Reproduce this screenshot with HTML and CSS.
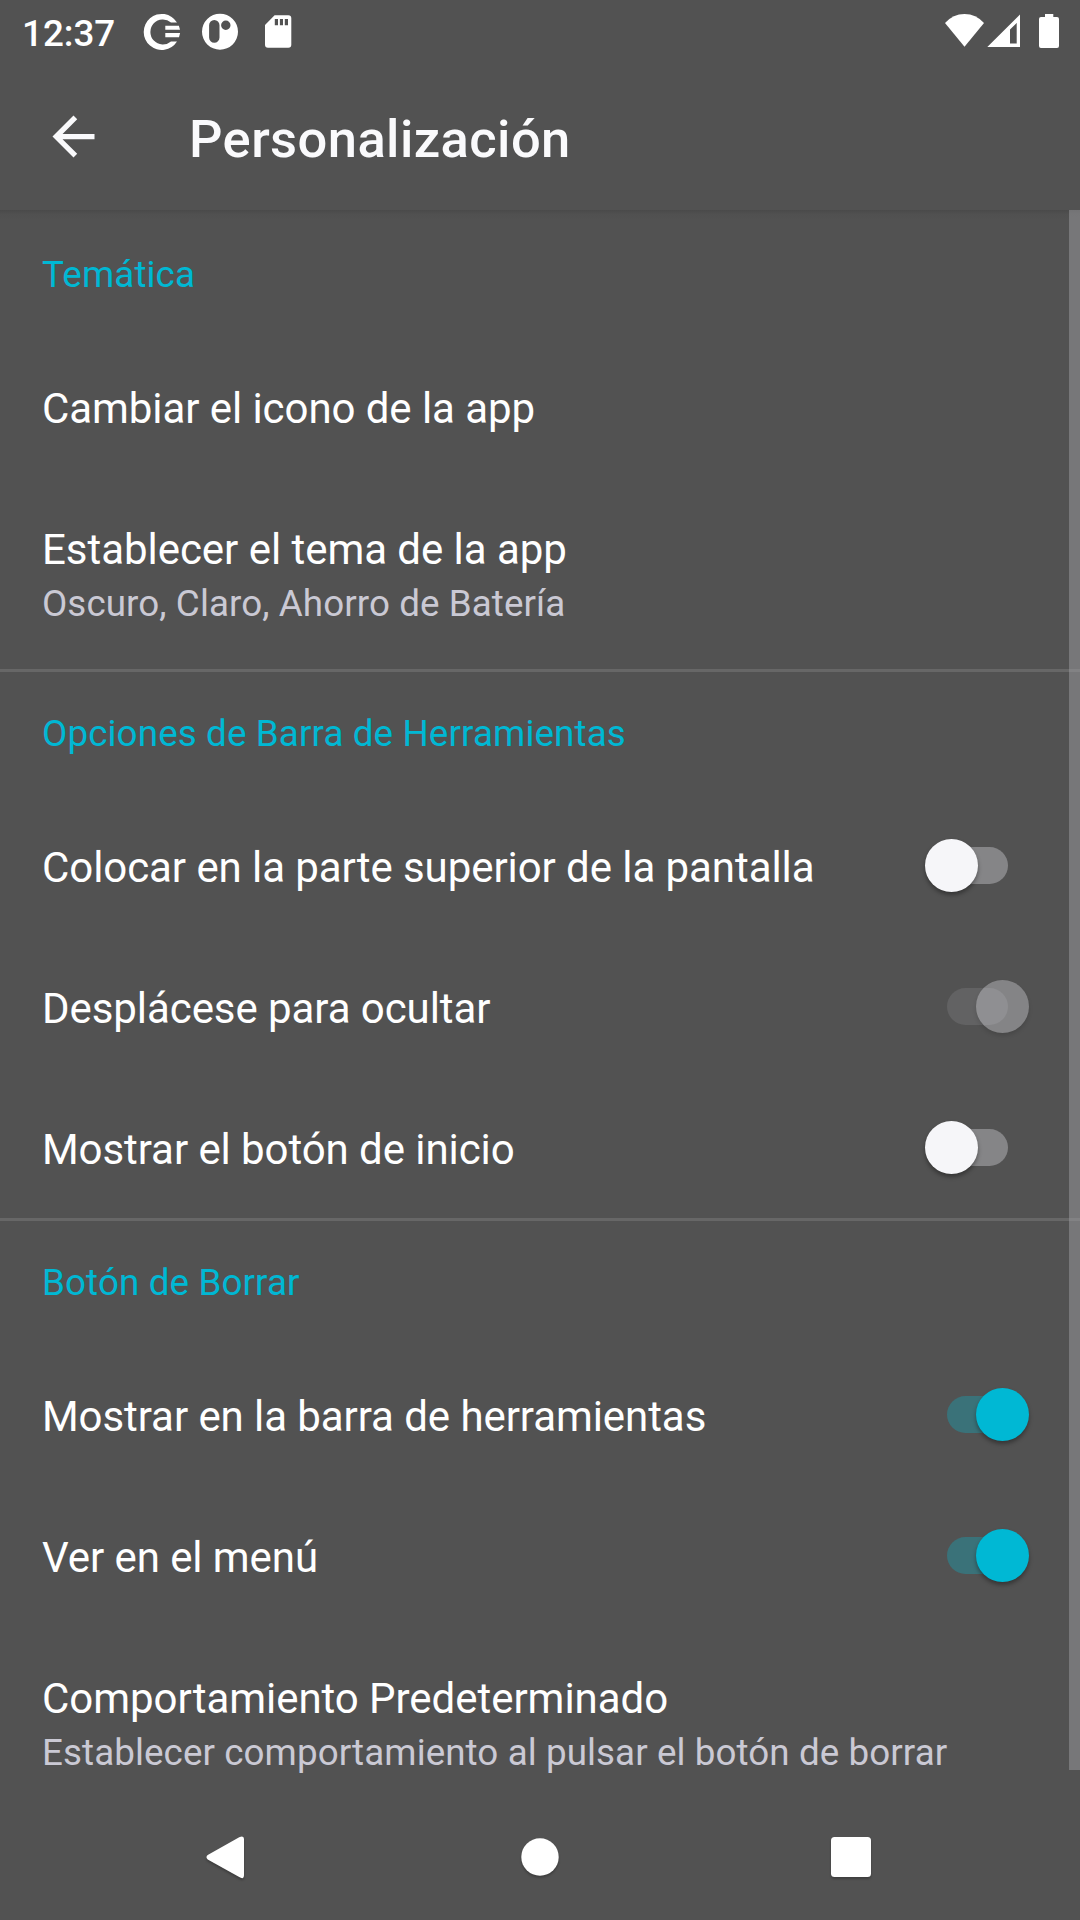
FILE: index.html
```html
<!DOCTYPE html>
<html lang="es">
<head>
<meta charset="utf-8">
<title>Personalización</title>
<link rel="stylesheet" href="styles.css">
</head>
<body>
<div class="screen">
  <div class="status">
    <span class="clock">12:37</span>
    <svg class="notifications" width="150" height="40" viewBox="143 12 150 40" fill="#fff">
      <path d="M177 22.400A18 18 0 1 0 177 41.400L171 41.400A12.500 12.500 0 1 1 171 22.400Z"/>
      <path d="M165.300 25.700H178.900L180 29.700H165.300ZM165.300 33.100H180.100L179 37.300H165.300Z"/>
      <path fill-rule="evenodd" d="M220 13.700a18 18 0 1 0 0 36a18 18 0 1 0 0-36ZM214.300 20a5.200 5.200 0 0 1 5.200 5.200V37.500a5.200 5.200 0 0 1-10.400 0V25.200a5.200 5.200 0 0 1 5.200-5.200ZM225.800 20.500a4.700 4.700 0 1 1 0 9.400a4.700 4.700 0 1 1 0-9.400Z"/>
      <path fill-rule="evenodd" d="M274.600 15.200H288.300a3 3 0 0 1 3 3V44.800a3 3 0 0 1-3 3H268a3 3 0 0 1-3-3V25ZM274.800 19V25.300H278V19ZM279.900 19V25.300H283V19ZM284.800 19V25.300H288V19Z"/>
    </svg>
    <svg class="system" width="120" height="40" viewBox="940 12 120 40" fill="#fff">
      <path d="M964.500 46.700L945 23Q953 14 964.500 14T984 23Z"/>
      <path fill-rule="evenodd" d="M1020 14.500V47H987.300ZM1016.700 23L1010 29.500V43.500H1016.700Z"/>
      <path d="M1045 14h8.300v3h3.700a2 2 0 0 1 2 2v27a2 2 0 0 1-2 2h-16a2 2 0 0 1-2-2v-27a2 2 0 0 1 2-2h4Z"/>
    </svg>
  </div>
  <header class="toolbar">
    <svg class="back" width="63" height="63" viewBox="0 0 24 24" fill="#fafafc"><path d="M20 11H7.830l5.590-5.590L12 4l-8 8 8 8 1.410-1.410L7.830 13H20v-2z"/></svg>
    <h1 class="heading">Personalización</h1>
  </header>
  <main class="list">
    <section class="group">
      <h2 class="category">Temática</h2>
      <div class="row"><div class="title">Cambiar el icono de la app</div></div>
      <div class="row tall"><div><div class="title">Establecer el tema de la app</div><div class="summary">Oscuro, Claro, Ahorro de Batería</div></div></div>
    </section>
    <section class="group">
      <h2 class="category">Opciones de Barra de Herramientas</h2>
      <div class="row"><div class="title">Colocar en la parte superior de la pantalla</div><span class="switch"></span></div>
      <div class="row"><div class="title">Desplácese para ocultar</div><span class="switch disabled"></span></div>
      <div class="row"><div class="title">Mostrar el botón de inicio</div><span class="switch"></span></div>
    </section>
    <section class="group">
      <h2 class="category">Botón de Borrar</h2>
      <div class="row"><div class="title">Mostrar en la barra de herramientas</div><span class="switch on"></span></div>
      <div class="row"><div class="title">Ver en el menú</div><span class="switch on"></span></div>
      <div class="row tall"><div><div class="title">Comportamiento Predeterminado</div><div class="summary">Establecer comportamiento al pulsar el botón de borrar</div></div></div>
    </section>
    <div class="scrollbar"></div>
  </main>
  <nav class="navbar">
    <svg class="key" width="60" height="60" viewBox="0 0 60 60" fill="#fff"><path d="M11.700 28L43.200 10.200Q48 8 48 12V48Q48 53 43.200 50L11.700 32.400Q9.200 30.200 11.700 28Z"/></svg>
    <svg class="key" width="60" height="60" viewBox="0 0 60 60" fill="#fff"><circle cx="30" cy="30" r="18.700"/></svg>
    <svg class="key" width="60" height="60" viewBox="0 0 60 60" fill="#fff"><rect x="11" y="10" width="40" height="40" rx="3.500"/></svg>
  </nav>
</div>
</body>
</html>
```
FILE: styles.css
```css
* { box-sizing: border-box; }
body { margin: 0; background: #525252; }
.screen {
  width: 1080px;
  height: 1920px;
  display: flex;
  flex-direction: column;
  overflow: hidden;
  background: #525252;
  color: #fff;
  font-family: Roboto, sans-serif;
}
.status {
  height: 63px;
  flex: none;
  display: flex;
  align-items: flex-start;
  padding: 12px 20px 0 22px;
}
.clock {
  width: 121px;
  padding-top: 1px;
  font-size: 36.750px;
  font-weight: 500;
  line-height: 42px;
}
.system { margin-left: auto; }
.toolbar {
  height: 147px;
  flex: none;
  display: flex;
  align-items: center;
  gap: 84px;
  padding-left: 42px;
}
.heading {
  margin: 0;
  padding-top: 4px;
  font-size: 52.500px;
  line-height: 62px;
  font-weight: 500;
  letter-spacing: .42px;
  color: #fafafc;
}
.list {
  height: 1584px;
  flex: none;
  position: relative;
  overflow: hidden;
  background: linear-gradient(#4a4a4a, #505050 4px, #525252 10px);
}
.group + .group { border-top: 3px solid #676767; }
.category {
  margin: 0;
  height: 126px;
  padding: 41px 42px 0;
  font-size: 36.750px;
  line-height: 48px;
  font-weight: 400;
  letter-spacing: .13px;
  color: #00b8d4;
}
.group + .group .category { height: 123px; padding-top: 38px; }
.row {
  height: 141px;
  display: flex;
  align-items: center;
  justify-content: space-between;
  padding: 0 51px 0 42px;
}
.row.tall { height: 192px; }
.title {
  padding-top: 5px;
  font-size: 42px;
  line-height: 56px;
  letter-spacing: -.07px;
  white-space: nowrap;
}
.row.tall .title { padding-top: 3px; letter-spacing: -.04px; }
.summary {
  padding-top: 2px;
  font-size: 36.750px;
  line-height: 48px;
  letter-spacing: .09px;
  color: #cac9d4;
  white-space: nowrap;
}
.switch {
  position: relative;
  width: 104px;
  height: 53px;
  flex: none;
}
.switch::before {
  content: "";
  position: absolute;
  left: 21.500px;
  top: 8px;
  width: 61.500px;
  height: 37px;
  border-radius: 19px;
  background: #858587;
}
.switch::after {
  content: "";
  position: absolute;
  left: 0;
  top: 0;
  width: 53px;
  height: 53px;
  border-radius: 50%;
  background: #f6f6f9;
  box-shadow: 0 3px 4px rgba(0, 0, 0, .35);
}
.switch.on::before { background: #3a7279; }
.switch.on::after { left: 51px; background: #00b8d4; }
.switch.disabled::before { background: #626263; }
.switch.disabled::after {
  left: 51px;
  background: rgba(248, 248, 255, .3);
  box-shadow: 0 3px 4px rgba(0, 0, 0, .12);
}
.scrollbar {
  position: absolute;
  top: 0;
  right: 0;
  width: 11px;
  height: 1560px;
  background: rgba(160, 160, 165, .48);
}
.navbar {
  height: 126px;
  flex: none;
  display: flex;
  justify-content: space-between;
  align-items: center;
  padding: 0 200px 0 196px;
}
.key { filter: drop-shadow(0 2px 1px rgba(0, 0, 0, .25)); }
.key:nth-child(2) { margin-left: 4px; }
```
